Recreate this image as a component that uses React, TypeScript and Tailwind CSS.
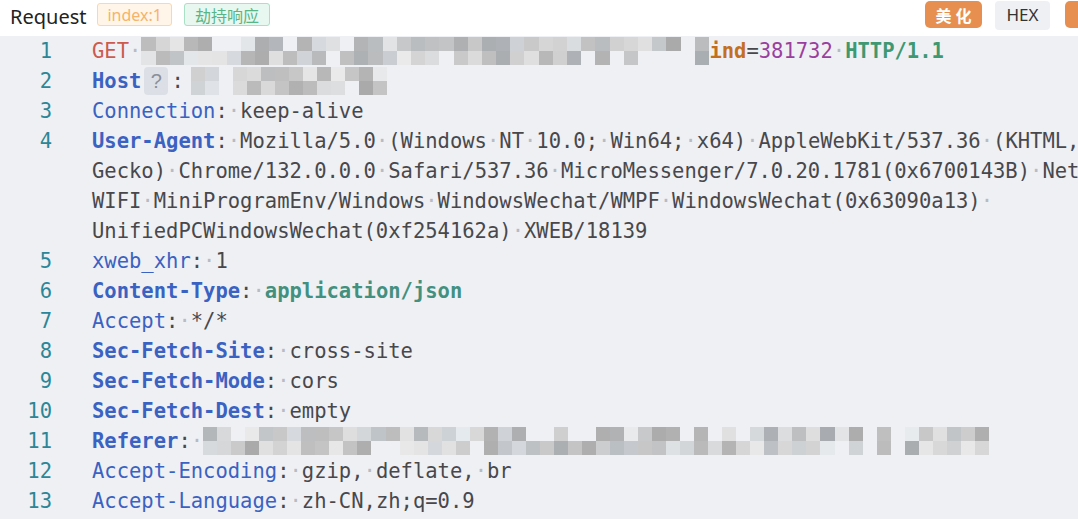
import React from "react";

const MONO = "font-['DejaVu_Sans_Mono','Liberation_Mono',monospace]";

function rng(seed: number) {
  let s = seed;
  return () => {
    s = (s * 1103515245 + 12345) % 2147483648;
    return s / 2147483648;
  };
}

function Mosaic({ cols, seed, width }: { cols: number; seed: number; width: number }) {
  const r = rng(seed);
  const bw = width / cols;
  const rows = [0, 1].map(() =>
    Array.from({ length: cols }, (_, i) => {
      const v = r();
      if (v < 0.14) return null;
      const g = Math.round(170 + r() * 65);
      const t = Math.round((r() - 0.5) * 10);
      return { i, c: `rgb(${g - Math.max(0, t)},${g},${g + Math.max(0, t)})` };
    })
  );
  return (
    <span className="inline-flex flex-col align-middle shrink-0" style={{ width }}>
      {rows.map((row, ri) => (
        <span key={ri} className="flex h-[14px]">
          {row.map((b, i) =>
            b ? (
              <span key={i} className="h-full shrink-0" style={{ width: bw, backgroundColor: b.c }} />
            ) : (
              <span key={i} className="h-full shrink-0" style={{ width: bw }} />
            )
          )}
        </span>
      ))}
    </span>
  );
}

function T({ text, cls }: { text: string; cls?: string }) {
  const parts = text.split(" ");
  return (
    <>
      {parts.map((p, i) => (
        <React.Fragment key={i}>
          {i > 0 && <span className="text-[#b7bbc3] font-normal">·</span>}
          {p && <span className={cls}>{p}</span>}
        </React.Fragment>
      ))}
    </>
  );
}

const KEY_B = "text-[#3a62c2] font-bold";
const KEY = "text-[#3a62c2]";
const VAL = "text-[#48484c]";

function Line({ n, children, extra }: { n: number; children: React.ReactNode; extra?: React.ReactNode[] }) {
  return (
    <div className="flex">
      <div className="w-[52px] shrink-0 text-right text-[#2b8797]">{n}</div>
      <div className="ml-[40px] flex flex-col whitespace-pre">
        <div className="h-[30px] flex items-center">{children}</div>
        {extra?.map((e, i) => (
          <div key={i} className="h-[30px] flex items-center">
            {e}
          </div>
        ))}
      </div>
    </div>
  );
}

function KV({ k, bold, v, vcls }: { k: string; bold?: boolean; v: string; vcls?: string }) {
  return (
    <>
      <span className={bold ? KEY_B : KEY}>{k}</span>
      <span className={VAL}>:</span>
      <T text={" " + v} cls={vcls ?? VAL} />
    </>
  );
}

export default function App() {
  return (
    <div className="w-[1078px] h-[519px] overflow-hidden bg-white">
      <div className="h-[36px] flex items-center pl-[10px] overflow-hidden font-['Noto_Sans','Noto_Sans_CJK_SC',sans-serif]">
        <span className="text-[20px] text-[#222] leading-none mb-[3px]">Request</span>
        <span className="ml-[11px] h-[23px] px-[9px] mb-[7px] flex items-center rounded-[3px] border border-[#fbd7ad] bg-[#fff5e8] text-[#f5b36b] text-[16px] leading-none">
          index:1
        </span>
        <span className="ml-[12px] h-[23px] px-[10px] mb-[7px] flex items-center rounded-[3px] border border-[#a9e0c6] bg-[#e8f7ef] text-[#58b586] text-[16px] leading-none font-['Noto_Sans_CJK_SC',sans-serif]">
          劫持响应
        </span>
        <div className="flex-1" />
        <span className="h-[27px] w-[57px] mb-[7px] shrink-0 flex items-center justify-center rounded-[5px] bg-[#e68f51] text-white text-[16px] font-bold tracking-[4px] pl-[4px] font-['Noto_Sans_CJK_SC',sans-serif]">
          美化
        </span>
        <span className="ml-[13px] h-[29px] w-[55px] mb-[6px] shrink-0 flex items-center justify-center rounded-[4px] bg-[#eef0f4] text-[#333] text-[17px]">
          HEX
        </span>
        <span className="ml-[15px] mr-[-44px] h-[27px] w-[57px] mb-[7px] shrink-0 rounded-[5px] bg-[#e68f51]" />
      </div>
      <div className={`bg-[#eff0f4] h-[483px] overflow-hidden text-[20.5px] leading-[30px] ${MONO}`}>
        <Line n={1}>
          <span className="text-[#cc5a4f]">GET</span>
          <span className="text-[#b7bbc3]">·</span>
          <Mosaic cols={40} seed={7} width={568} />
          <span className="text-[#c46f1f] font-bold">ind</span>
          <span className={VAL}>=</span>
          <span className="text-[#9a3f9e]">381732</span>
          <span className="text-[#b7bbc3]">·</span>
          <span className="text-[#3e9872] font-bold">HTTP/1.1</span>
        </Line>
        <Line n={2}>
          <span className={KEY_B}>Host</span>
          <span className="mx-[3px] w-[24px] h-[28px] inline-flex items-center justify-center rounded-[4px] bg-[#dcdfe5] text-[#8a8f99] text-[20px] font-['Liberation_Sans',sans-serif]">
            ?
          </span>
          <span className={VAL}>:</span>
          <span className="w-[7px]" />
          <Mosaic cols={14} seed={21} width={196} />
        </Line>
        <Line n={3}>
          <KV k="Connection" v="keep-alive" />
        </Line>
        <Line
          n={4}
          extra={[
            <T key="a" text="Gecko) Chrome/132.0.0.0 Safari/537.36 MicroMessenger/7.0.20.1781(0x6700143B) NetType/" cls={VAL} />,
            <T key="b" text="WIFI MiniProgramEnv/Windows WindowsWechat/WMPF WindowsWechat(0x63090a13) " cls={VAL} />,
            <T key="c" text="UnifiedPCWindowsWechat(0xf254162a) XWEB/18139" cls={VAL} />,
          ]}
        >
          <KV k="User-Agent" bold v="Mozilla/5.0 (Windows NT 10.0; Win64; x64) AppleWebKit/537.36 (KHTML, like" />
        </Line>
        <Line n={5}>
          <KV k="xweb_xhr" v="1" />
        </Line>
        <Line n={6}>
          <KV k="Content-Type" bold v="application/json" vcls="text-[#43907f] font-bold" />
        </Line>
        <Line n={7}>
          <KV k="Accept" v="*/*" />
        </Line>
        <Line n={8}>
          <KV k="Sec-Fetch-Site" bold v="cross-site" />
        </Line>
        <Line n={9}>
          <KV k="Sec-Fetch-Mode" bold v="cors" />
        </Line>
        <Line n={10}>
          <KV k="Sec-Fetch-Dest" bold v="empty" />
        </Line>
        <Line n={11}>
          <span className={KEY_B}>Referer</span>
          <span className={VAL}>:</span>
          <span className="text-[#b7bbc3]">·</span>
          <Mosaic cols={56} seed={99} width={786} />
        </Line>
        <Line n={12}>
          <KV k="Accept-Encoding" v="gzip, deflate, br" />
        </Line>
        <Line n={13}>
          <KV k="Accept-Language" v="zh-CN,zh;q=0.9" />
        </Line>
      </div>
    </div>
  );
}
